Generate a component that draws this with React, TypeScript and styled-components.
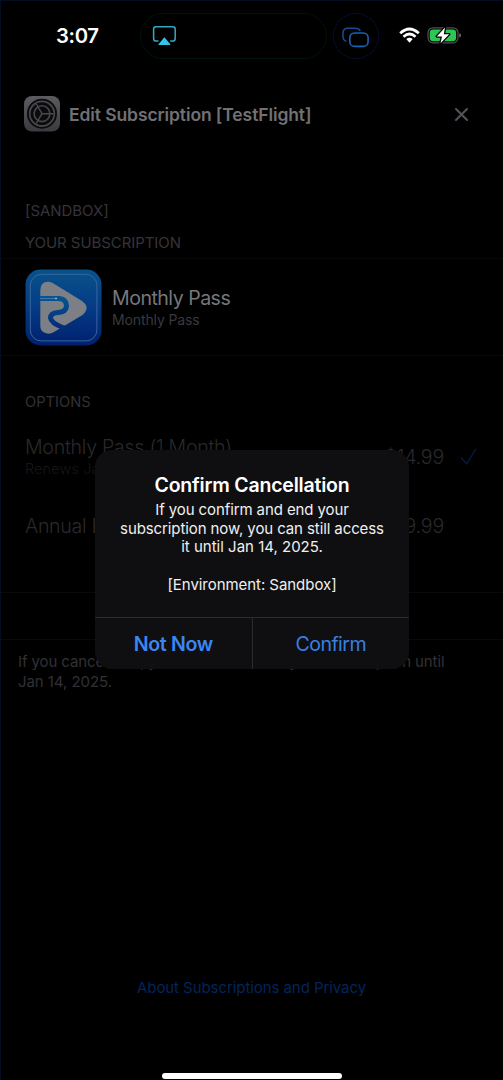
import React from 'react';
import styled, { createGlobalStyle } from 'styled-components';

const GlobalStyle = createGlobalStyle`
  * { box-sizing: border-box; }
  body { margin: 0; background: #000; font-family: Inter, "Liberation Sans", sans-serif; }
`;

const Screen = styled.main`
  position: relative;
  width: 503px;
  height: 1080px;
  overflow: hidden;
  background: #000;
  border-top: 1px solid #020d1e;
  border-left: 1px solid #020d1e;
  display: flex;
  flex-direction: column;
`;

const Label = styled.span<{ $size: number; $color: string; $weight?: number; $track?: number; $line?: number }>`
  font-size: ${p => p.$size}px;
  color: ${p => p.$color};
  font-weight: ${p => p.$weight ?? 400};
  letter-spacing: ${p => p.$track ?? 0}px;
  line-height: ${p => p.$line ?? 20}px;
  white-space: nowrap;
`;

const StatusBar = styled.header`
  height: 71px;
  padding: 12px 0 0 55px;
  display: flex;
  align-items: flex-start;
`;

const Clock = styled.div`
  width: 84px;
  height: 46px;
  display: flex;
  align-items: center;
`;

const Island = styled.div`
  width: 187px;
  height: 46px;
  border: 1px solid #02130f;
  border-radius: 23px;
  padding: 11px 0 0 11px;
`;

const IslandBubble = styled.div`
  width: 46px;
  height: 46px;
  margin-left: 6px;
  border: 1px solid #030f2c;
  border-radius: 50%;
  padding: 12px 0 0 7px;
`;

const StatusIcons = styled.div`
  display: flex;
  align-items: center;
  gap: 7px;
  margin: 13px 0 0 20px;
`;

const SheetHeader = styled.div`
  height: 36px;
  margin-top: 24px;
  padding: 0 34px 0 23px;
  display: flex;
  align-items: center;
`;

const SheetTitle = styled.div`
  flex: 1;
  margin-left: 9px;
  padding-top: 1px;
  display: flex;
`;

const SectionLabel = styled.div<{ $top: number }>`
  margin: ${p => p.$top}px 0 0 24px;
  height: 20px;
  display: flex;
`;

const PlanRow = styled.section`
  height: 98px;
  margin-top: 5px;
  padding-left: 24px;
  border-top: 1px solid #08080a;
  border-bottom: 1px solid #08080a;
  display: flex;
  align-items: center;
  gap: 10px;
`;

const Stack = styled.div<{ $shift?: number }>`
  padding-top: ${p => p.$shift ?? 0}px;
  display: flex;
  flex-direction: column;
`;

const OptionRow = styled.div<{ $top: number; $height: number }>`
  height: ${p => p.$height}px;
  margin-top: ${p => p.$top}px;
  padding: 0 25px 0 24px;
  display: flex;
  align-items: center;
`;

const Price = styled.div`
  margin-left: auto;
  display: flex;
`;

const CheckSlot = styled.div`
  width: 34px;
  padding: 0 0 0 16px;
  display: flex;
`;

const CancelRow = styled.div`
  height: 48px;
  margin-top: 54px;
  border-top: 1px solid #09090a;
  border-bottom: 1px solid #09090a;
`;

const Footnote = styled.div`
  margin: 12px 0 0 17px;
  display: flex;
  flex-direction: column;
`;

const PrivacyLink = styled.a`
  margin-top: 286px;
  padding-left: 136px;
  display: flex;
`;

const HomeIndicator = styled.div`
  width: 180px;
  height: 6px;
  margin: auto 0 1px 161px;
  border-radius: 3px;
  background: #fff;
`;

const Dialog = styled.div`
  position: absolute;
  left: 94px;
  top: 449px;
  width: 314px;
  height: 219px;
  border-radius: 17px;
  overflow: hidden;
  background: #0f0f11;
  display: flex;
  flex-direction: column;
`;

const DialogBody = styled.div`
  flex: 1;
  padding-top: 20px;
  display: flex;
  flex-direction: column;
  align-items: center;
`;

const DialogActions = styled.div`
  height: 52px;
  border-top: 1px solid #2b2b2d;
  display: flex;
`;

const DialogButton = styled.button`
  flex: 1;
  border: 0;
  padding: 0;
  background: none;
  font-family: inherit;
  & + & { border-left: 1px solid #2b2b2d; }
`;

const Blank = styled.div`
  height: 18.7px;
`;

const AirPlay = () => (
  <svg width="25" height="22" viewBox="0 0 25 22">
    <path d="M6.5 16H4.2Q1.6 16 1.6 13.4V4.2Q1.6 1.7 4.2 1.7H20.6Q23.2 1.7 23.2 4.2V13.4Q23.2 16 20.6 16H18.2" fill="none" stroke="#35a9bd" strokeWidth="1.5" />
    <path d="M12.4 12.2L18.3 19.2Q18.6 20 17.8 20H7Q6.1 20 6.5 19.2Z" fill="#35c4e5" />
  </svg>
);

const Windows = () => (
  <svg width="30" height="24" viewBox="0 0 30 24">
    <path d="M5.5 15.4Q2 14.4 2 10.5V7Q2 2.2 7 2.2H14Q18 2.2 19.3 5" fill="none" stroke="#164d91" strokeWidth="1.5" />
    <rect x="8.8" y="7" width="18.3" height="13.4" rx="4.7" fill="none" stroke="#1b61b5" strokeWidth="1.6" />
  </svg>
);

const Wifi = () => (
  <svg width="21" height="17" viewBox="0 0 21 17">
    <g fill="none" stroke="#fff" strokeWidth="2.7">
      <path d="M1.2 6.2Q10.5 -2.2 19.8 6.2" />
      <path d="M4.5 9.7Q10.5 4.3 16.5 9.7" />
    </g>
    <path d="M7.3 12.1Q10.5 9.6 13.7 12.1L10.5 15.7Z" fill="#fff" />
  </svg>
);

const Battery = () => (
  <svg width="35" height="19" viewBox="0 0 35 19">
    <rect x="1" y="1.8" width="30" height="15" rx="5" fill="none" stroke="#535055" strokeWidth="1.2" />
    <path d="M32.4 7.2Q34 7.6 34 9.3T32.4 11.6Z" fill="#777" />
    <rect x="2.7" y="3.5" width="26.4" height="11.7" rx="3.4" fill="#2bc653" />
    <path d="M18 1.6L9.8 10.4H15L13.5 17.2L22.2 8.2H16.8Z" fill="#fff" stroke="#000" strokeWidth="2.6" paintOrder="stroke" strokeLinejoin="round" />
  </svg>
);

const SettingsGear = () => (
  <svg width="36" height="36" viewBox="0 0 36 36">
    <defs>
      <linearGradient id="gearBg" x1="0" y1="0" x2="0" y2="1">
        <stop offset="0" stopColor="#5c5b5f" />
        <stop offset="1" stopColor="#3b3a40" />
      </linearGradient>
    </defs>
    <rect width="36" height="35.5" rx="8" fill="url(#gearBg)" />
    <circle cx="18" cy="17.7" r="15" fill="#0b0b0d" />
    <circle cx="18" cy="17.7" r="12.3" fill="none" stroke="#47464a" strokeWidth="1.8" />
    <circle cx="18" cy="17.7" r="7.9" fill="none" stroke="#47464a" strokeWidth="1.6" />
    <g stroke="#4b4a4e" strokeWidth="1.4" fill="none">
      <path d="M18 17.7H29.5M18 17.7L12.3 8M18 17.7L12.3 27.4" />
    </g>
  </svg>
);

const PassLogo = () => (
  <svg width="77" height="77" viewBox="0 0 77 77">
    <defs>
      <linearGradient id="logoBg" x1="0" y1="0" x2="0" y2="1">
        <stop offset="0" stopColor="#09528a" />
        <stop offset="0.45" stopColor="#053d86" />
        <stop offset="1" stopColor="#00206f" />
      </linearGradient>
      <linearGradient id="ribbon" x1="0" y1="0" x2="0" y2="1">
        <stop offset="0" stopColor="#07538f" />
        <stop offset="1" stopColor="#032c79" />
      </linearGradient>
    </defs>
    <rect x="0.5" y="0.5" width="76" height="76" rx="15" fill="url(#logoBg)" />
    <rect x="5.3" y="5.3" width="66.6" height="66.6" rx="11" fill="none" stroke="#38679b" strokeWidth="1" />
    <path d="M15.3 21Q15.3 13 23 12.8Q26 12.7 29 14.8L57 32Q66 38.5 57.5 46L29 63Q24 66 19 63.5Q15.3 61.5 15.3 57Z" fill="#7c7f85" />
    <path d="M15 29.5H34.5Q41.5 30.5 41.5 37Q41 43 33 43.5Q25.5 44 25.5 49Q26 54 39 59" fill="none" stroke="url(#ribbon)" strokeWidth="5" />
    <path d="M15 29.5H30" stroke="#3f75a5" strokeWidth="1.2" />
    <circle cx="31" cy="29.5" r="1.1" fill="#91a5b8" />
  </svg>
);

const Close = () => (
  <svg width="15" height="15" viewBox="0 0 15 15">
    <path d="M2 2L13 13M13 2L2 13" stroke="#545359" strokeWidth="2.1" strokeLinecap="round" />
  </svg>
);

const Check = () => (
  <svg width="18" height="18" viewBox="0 0 18 18">
    <path d="M1 9.5L6.6 16L15.8 1" fill="none" stroke="#021d4c" strokeWidth="1.3" />
  </svg>
);

export default function App() {
  return (
    <>
      <GlobalStyle />
      <Screen>
        <StatusBar>
          <Clock><Label $size={20.3} $weight={600} $color="#fff" $track={-0.35}>3:07</Label></Clock>
          <Island><AirPlay /></Island>
          <IslandBubble><Windows /></IslandBubble>
          <StatusIcons><Wifi /><Battery /></StatusIcons>
        </StatusBar>

        <SheetHeader>
          <SettingsGear />
          <SheetTitle><Label $size={17.5} $weight={600} $color="#717174" $track={-0.1}>Edit Subscription [TestFlight]</Label></SheetTitle>
          <Close />
        </SheetHeader>

        <SectionLabel $top={69}><Label $size={15} $color="#35343a" $track={-0.05}>[SANDBOX]</Label></SectionLabel>
        <SectionLabel $top={12}><Label $size={15} $color="#35343a" $track={-0.07}>YOUR SUBSCRIPTION</Label></SectionLabel>

        <PlanRow>
          <PassLogo />
          <Stack $shift={2}>
            <Label $size={19.6} $color="#77777a" $track={-0.53} $line={24}>Monthly Pass</Label>
            <Label $size={14} $color="#3a393f" $track={-0.12}>Monthly Pass</Label>
          </Stack>
        </PlanRow>

        <SectionLabel $top={36}><Label $size={14.6} $color="#323136" $track={0.05}>OPTIONS</Label></SectionLabel>

        <OptionRow $top={23} $height={44}>
          <Stack>
            <Label $size={19.6} $weight={300} $color="#29292b" $track={-0.28} $line={24}>Monthly Pass (1 Month)</Label>
            <Label $size={14.5} $weight={300} $color="#161619" $track={0.1}>Renews Jan 14, 2025</Label>
          </Stack>
          <Price><Label $size={19.6} $weight={300} $color="#29292b" $track={-0.2}>$14.99</Label></Price>
          <CheckSlot><Check /></CheckSlot>
        </OptionRow>
        <OptionRow $top={35} $height={24}>
          <Label $size={19.6} $weight={300} $color="#29292b" $track={-0.3} $line={24}>Annual Pass (1 Year)</Label>
          <Price><Label $size={19.6} $weight={300} $color="#29292b" $track={-0.2} $line={24}>$149.99</Label></Price>
          <CheckSlot />
        </OptionRow>

        <CancelRow />
        <Footnote>
          <Label $size={15} $color="#323035" $track={-0.1}>If you cancel now, you can still access your subscription until</Label>
          <Label $size={15} $color="#323035" $track={-0.06}>Jan 14, 2025.</Label>
        </Footnote>

        <PrivacyLink><Label $size={15} $color="#02255c" $track={-0.07}>About Subscriptions and Privacy</Label></PrivacyLink>
        <HomeIndicator />

        <Dialog role="alertdialog">
          <DialogBody>
            <Label $size={19.5} $weight={600} $color="#fff" $track={-0.2} $line={31}>Confirm Cancellation</Label>
            <Label $size={15} $color="#efeff0" $track={-0.1} $line={18.7}>If you confirm and end your</Label>
            <Label $size={15} $color="#efeff0" $track={-0.1} $line={18.7}>subscription now, you can still access</Label>
            <Label $size={15} $color="#efeff0" $line={18.7}>it until Jan 14, 2025.</Label>
            <Blank />
            <Label $size={15} $color="#efeff0" $track={-0.05} $line={18.7}>[Environment: Sandbox]</Label>
          </DialogBody>
          <DialogActions>
            <DialogButton><Label $size={19.6} $weight={600} $color="#3b86f3" $track={-0.35}>Not Now</Label></DialogButton>
            <DialogButton><Label $size={19.6} $color="#397fe2" $track={-0.55}>Confirm</Label></DialogButton>
          </DialogActions>
        </Dialog>
      </Screen>
    </>
  );
}
